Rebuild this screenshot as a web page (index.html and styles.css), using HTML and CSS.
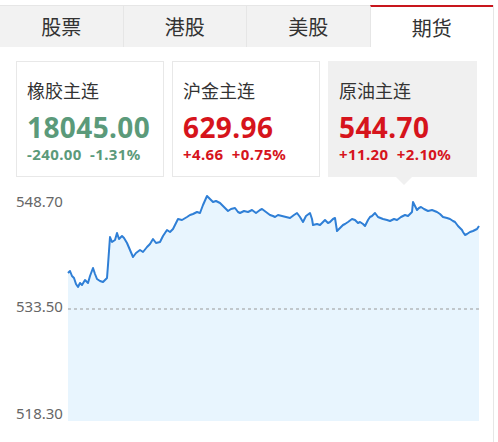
FILE: index.html
```html
<!DOCTYPE html>
<html lang="zh-CN">
<head>
  <meta charset="UTF-8" />
  <title>行情</title>
  <link rel="stylesheet" href="styles.css">
</head>
<body>
<div class="widget">
  <div class="tabs">
    <div class="tab">股票</div>
    <div class="tab">港股</div>
    <div class="tab">美股</div>
    <div class="tab active">期货</div>
  </div>

  <div class="cards">
    <div class="card">
      <div class="card-title">橡胶主连</div>
      <div class="card-price down">18045.00</div>
      <div class="card-change down">-240.00 -1.31%</div>
    </div>
    <div class="card">
      <div class="card-title">沪金主连</div>
      <div class="card-price up">629.96</div>
      <div class="card-change up">+4.66 +0.75%</div>
    </div>
    <div class="card selected">
      <div class="card-title">原油主连</div>
      <div class="card-price up">544.70</div>
      <div class="card-change up">+11.20 +2.10%</div>
    </div>
  </div>

  <svg class="chart" width="493" height="260" viewBox="0 0 493 260">
    <!-- area under the price line -->
    <polygon class="area" points="68,96 70,94 72,99 74,101 76,107 78,110 80,106 82,108 85,103 88,106 90,99 93,91 95,97 97,102 100,104 103,105 105,103 107,101 108,88 110,60 112,65 115,63 117,56 119,62 122,59 124,61 127,66 130,73 133,80 136,76 140,73 143,75 147,70 150,67 153,62 156,66 160,65 163,59 167,53 170,55 173,52 176,46 178,42 182,43 187,40 190,38 193,37 197,35 200,36 203,28 207,19 210,22 213,25 216,24 220,26 224,30 228,34 231,32 235,31 238,35 240,36 244,34 248,35 252,33 256,36 260,33 262,32 266,35 270,38 273,39 275,40 278,38 282,39 286,40 290,41 294,38 297,36 300,40 303,45 306,39 310,36 312,42 313,48 317,47 320,48 323,45 325,43 328,46 330,45 333,42 335,41 337,54 340,51 343,48 345,47 348,45 352,42 355,43 358,46 360,45 363,47 365,49 368,43 370,40 372,39 375,36 378,40 383,42 387,43 390,44 394,42 397,43 401,40 405,38 408,39 410,37 412,35 413,25 415,29 417,33 419,31 421,30 424,32 428,34 432,33 437,35 440,37 443,40 447,41 450,42 453,44 455,45 458,49 460,51 462,53 463,55 465,58 467,57 470,55 473,54 477,52 479,49 479,244 68,244"/>
    <line class="mid" x1="68" y1="132" x2="480" y2="132"/>
    <polyline class="line" points="68,96 70,94 72,99 74,101 76,107 78,110 80,106 82,108 85,103 88,106 90,99 93,91 95,97 97,102 100,104 103,105 105,103 107,101 108,88 110,60 112,65 115,63 117,56 119,62 122,59 124,61 127,66 130,73 133,80 136,76 140,73 143,75 147,70 150,67 153,62 156,66 160,65 163,59 167,53 170,55 173,52 176,46 178,42 182,43 187,40 190,38 193,37 197,35 200,36 203,28 207,19 210,22 213,25 216,24 220,26 224,30 228,34 231,32 235,31 238,35 240,36 244,34 248,35 252,33 256,36 260,33 262,32 266,35 270,38 273,39 275,40 278,38 282,39 286,40 290,41 294,38 297,36 300,40 303,45 306,39 310,36 312,42 313,48 317,47 320,48 323,45 325,43 328,46 330,45 333,42 335,41 337,54 340,51 343,48 345,47 348,45 352,42 355,43 358,46 360,45 363,47 365,49 368,43 370,40 372,39 375,36 378,40 383,42 387,43 390,44 394,42 397,43 401,40 405,38 408,39 410,37 412,35 413,25 415,29 417,33 419,31 421,30 424,32 428,34 432,33 437,35 440,37 443,40 447,41 450,42 453,44 455,45 458,49 460,51 462,53 463,55 465,58 467,57 470,55 473,54 477,52 479,49"/>
    <text class="axis" x="16" y="30">548.70</text>
    <text class="axis" x="16" y="135">533.50</text>
    <text class="axis" x="16" y="242">518.30</text>
  </svg>
</div>
</body>
</html>
```

FILE: styles.css
```css
body {
  margin: 0;
  background: #fff;
  font-family: "Noto Sans", "Noto Sans CJK SC", sans-serif;
  color: #333;
}

.widget {
  width: 493px;
  height: 437px;
  border-right: 1px solid #e6e6e6;
  border-bottom: 1px solid #e6e6e6;
}

.tabs {
  display: flex;
  margin-top: 5px;
  height: 41px;
  background: #f2f2f2;
  border-top: 1px solid #e6e6e6;
}

.tab {
  width: 123px;
  display: flex;
  align-items: center;
  justify-content: center;
  font-family: "Noto Sans CJK SC", sans-serif;
  font-size: 20px;
  color: #333;
}

.tab + .tab {
  border-left: 1px solid #e6e6e6;
}

.tab.active {
  background: #fff;
  margin-top: -1px;
  border-top: 2px solid #c8161d;
}

.cards {
  display: flex;
  gap: 8px;
  padding: 14px 16px 0;
}

.card {
  position: relative;
  width: 126px;
  height: 98px;
  padding: 16px 10px 0;
  border: 1px solid #e8e8e8;
}

.card.selected {
  width: 127px;
  border-color: #f0f0f0;
  background: #f0f0f0;
}

.card.selected::after {
  content: "";
  position: absolute;
  left: 67px;
  bottom: -9px;
  border-left: 8px solid transparent;
  border-right: 8px solid transparent;
  border-top: 8px solid #f0f0f0;
}

.card-title {
  font-family: "Noto Sans CJK SC", sans-serif;
  font-size: 18px;
  line-height: 25px;
  color: #333;
}

.card-price {
  margin-top: 8px;
  font-size: 28px;
  line-height: 32px;
  font-weight: bold;
  letter-spacing: 0.4px;
}

.card-change {
  margin-top: 1px;
  font-size: 15px;
  line-height: 20px;
  font-weight: bold;
  letter-spacing: 0.4px;
  word-spacing: 4px;
}

.down {
  color: #5b9a7a;
}

.up {
  color: #d6141c;
}

.chart {
  display: block;
}

.chart .area {
  fill: #e8f5fe;
}

.chart .line {
  fill: none;
  stroke: #2f7fd6;
  stroke-width: 2;
  stroke-linejoin: round;
}

.chart .mid {
  stroke: #999;
  stroke-width: 1;
  stroke-dasharray: 3 3;
}

.chart .axis {
  font-family: "Noto Sans", sans-serif;
  font-size: 15px;
  fill: #666;
}
```
